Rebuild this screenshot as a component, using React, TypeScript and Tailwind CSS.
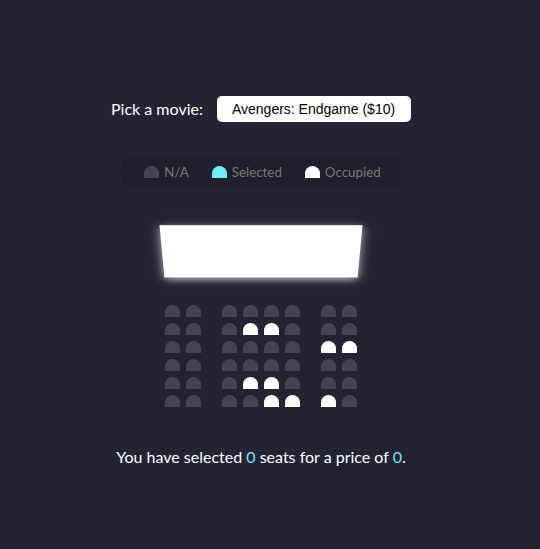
import React, { useState } from 'react';

const movies = [
  { name: 'Avengers: Endgame', price: 10 },
  { name: 'Joker', price: 12 },
  { name: 'Toy Story 4', price: 8 },
  { name: 'The Lion King', price: 9 },
];

// occupied seat indexes per row
const occupied: number[][] = [[], [3, 4], [6, 7], [], [3, 4], [4, 5, 6]];

function Seat({ kind, idx }: { kind: 'na' | 'selected' | 'occupied'; idx?: number }) {
  const color = kind === 'selected' ? 'bg-[#6feaf6]' : kind === 'occupied' ? 'bg-white' : 'bg-[#444451]';
  let margin = 'm-[3px]';
  if (idx === 1) margin = 'mt-[3px] mb-[3px] ml-[3px] mr-[18px]';
  if (idx === 6) margin = 'mt-[3px] mb-[3px] mr-[3px] ml-[18px]';
  return <div className={`h-[12px] w-[15px] rounded-t-[10px] ${color} ${margin}`} />;
}

export default function App() {
  const [movie, setMovie] = useState(0);
  const [selected, setSelected] = useState<string[]>([]);

  const toggle = (key: string) => {
    setSelected(selected.includes(key) ? selected.filter((s) => s !== key) : [...selected, key]);
  };

  return (
    <div className="flex h-screen flex-col items-center justify-center bg-[#242333] pr-[18px] font-['Lato',sans-serif] text-white">
      <div className="my-[20px] flex items-center text-[16px]">
        <label>Pick a movie:</label>
        <select
          value={movie}
          onChange={(e) => setMovie(Number(e.target.value))}
          className="ml-[14px] h-[26px] w-[194px] appearance-none rounded-[5px] border-0 bg-white px-[15px] py-[5px] font-['Liberation_Sans',Arial,sans-serif] text-[14px] leading-[16px] text-black"
        >
          {movies.map((m, i) => (
            <option key={m.name} value={i}>
              {m.name} (${m.price})
            </option>
          ))}
        </select>
      </div>

      <ul className="my-[16px] flex justify-between rounded-[5px] bg-[rgba(0,0,0,0.1)] px-[10px] py-[5px] text-[#777]">
        <li className="mx-[10px] flex items-center justify-center">
          <Seat kind="na" />
          <small className="ml-[2px] text-[13.33px] leading-[16px]">N/A</small>
        </li>
        <li className="mx-[10px] flex items-center justify-center">
          <Seat kind="selected" />
          <small className="ml-[2px] text-[13.33px] leading-[16px]">Selected</small>
        </li>
        <li className="mx-[10px] flex items-center justify-center">
          <Seat kind="occupied" />
          <small className="ml-[2px] text-[13.33px] leading-[16px]">Occupied</small>
        </li>
      </ul>

      <div className="mb-[30px] perspective-[1000px]">
        <div className="my-[15px] h-[70px] w-full bg-white shadow-[0_3px_10px_rgba(255,255,255,0.7)] -rotate-x-45" />
        {occupied.map((occ, r) => (
          <div key={r} className="flex">
            {Array.from({ length: 8 }).map((_, i) => {
              const key = `${r}-${i}`;
              const kind = occ.includes(i) ? 'occupied' : selected.includes(key) ? 'selected' : 'na';
              return (
                <div key={i} onClick={() => kind !== 'occupied' && toggle(key)} className="cursor-pointer">
                  <Seat kind={kind} idx={i} />
                </div>
              );
            })}
          </div>
        ))}
      </div>

      <p className="my-[5px] text-[16px]">
        You have selected <span className="text-[#6feaf6]">{selected.length}</span> seats for a price of{' '}
        <span className="text-[#6feaf6]">{selected.length * movies[movie].price}</span>.
      </p>
    </div>
  );
}
